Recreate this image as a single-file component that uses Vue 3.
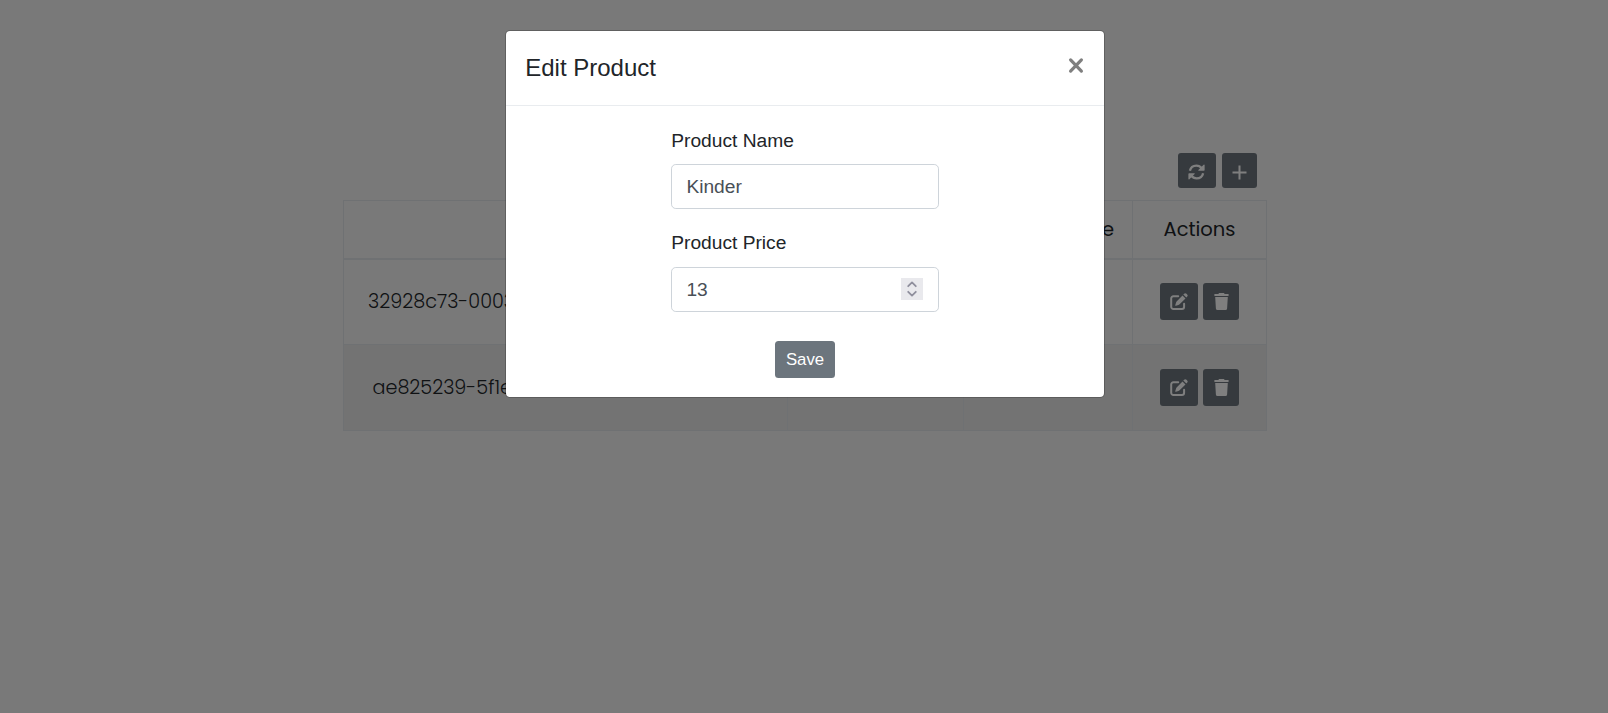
<script setup>
import { ref } from 'vue'

const rows = [
  { id: '32928c73-0003', cls: 'first' },
  { id: 'ae825239-5f1e', cls: 'second' },
]
const name = ref('Kinder')
const price = ref('13')
</script>

<template>
  <div class="page">
    <main class="products">
      <div class="toolbar">
        <button class="btn refresh" aria-label="Refresh">
          <svg width="17" height="16" viewBox="0 0 17 16">
            <path class="arc" d="M1.9 6.8C2.6 3.6 5.2 1.6 8.4 1.6c2.2 0 4 .9 5.3 2.6" />
            <path d="M16.6.9v5.2q0 .7-.7.7h-5.2q-.9-.2-.3-.9L15.6.7q.8-.5 1 .2z" />
            <path class="arc" d="M15.1 9.2c-.7 3.2-3.3 5.2-6.5 5.2-2.2 0-4-.9-5.3-2.6" />
            <path d="M.4 15.1V9.9q0-.7.7-.7h5.2q.9.2.3.9l-5.2 5.2q-.8.5-1-.2z" />
          </svg>
        </button>
        <button class="btn add" aria-label="Add">
          <svg width="15" height="15" viewBox="0 0 15 15"><path d="M6.5 .5h2v6h6v2h-6v6h-2v-6h-6v-2h6z" /></svg>
        </button>
      </div>
      <div class="table">
        <div class="tr head">
          <div class="cell"></div>
          <div class="cell"></div>
          <div class="cell price">Price</div>
          <div class="cell actions">Actions</div>
        </div>
        <div v-for="r in rows" :key="r.id" class="tr body" :class="r.cls">
          <div class="cell id">{{ r.id }}</div>
          <div class="cell"></div>
          <div class="cell"></div>
          <div class="cell buttons">
            <button class="btn edit" aria-label="Edit">
              <svg width="18" height="18" viewBox="0 0 18 18">
                <path class="frame" d="M8.2 3.2H3.4A2.2 2.2 0 0 0 1.2 5.4v8.4A2.2 2.2 0 0 0 3.4 16h8.5a2.2 2.2 0 0 0 2.2-2.2V10.8" />
                <path d="M13.3 1.6 14.1.8a1.7 1.7 0 0 1 2.4 0l.6.6a1.7 1.7 0 0 1 0 2.4l-.8.8zM12.5 2.4l3 3-6.2 6.1q-.4.4-.9.6l-2.5.7q-.8.1-.6-.7l.8-2.6q.1-.5.5-.9z" />
              </svg>
            </button>
            <button class="btn trash" aria-label="Delete">
              <svg width="15" height="17" viewBox="0 0 15 17">
                <path d="M5 .1h5l.6 1H14q.8 0 .8.9T14 2.9H1Q.2 2.9.2 2T1 1.1h3.4zM1.2 4h12.6l-.7 11.4q-.1 1.6-1.6 1.6h-8q-1.5 0-1.6-1.6z" />
              </svg>
            </button>
          </div>
        </div>
      </div>
    </main>

    <div class="backdrop"></div>

    <section class="modal" role="dialog">
      <header class="modal-head">
        <h5>Edit Product</h5>
        <button class="close" aria-label="Close">
          <svg width="14" height="15" viewBox="0 0 14 15"><path d="M1.6 1.9 12.4 13.1M12.4 1.9 1.6 13.1" /></svg>
        </button>
      </header>
      <form class="form" @submit.prevent>
        <label for="name">Product Name</label>
        <div class="field"><input id="name" v-model="name" type="text" /></div>
        <label class="price-label" for="price">Product Price</label>
        <div class="field">
          <input id="price" v-model="price" type="text" />
          <span class="spinner">
            <svg width="22" height="22" viewBox="0 0 22 22"><path d="M7.2 8.2 11 4.4l3.8 3.8M7.2 13.8l3.8 3.8 3.8-3.8" /></svg>
          </span>
        </div>
        <button class="save" type="submit">Save</button>
      </form>
    </section>
  </div>
</template>

<style>
body {
  margin: 0;
}
</style>

<style scoped>
* {
  box-sizing: border-box;
}
.page {
  position: relative;
  width: 100%;
  height: 713px;
  overflow: hidden;
  background: #f3f3f3;
  color: #212529;
  font-family: "Liberation Sans", Arial, sans-serif;
}
button {
  border: 0;
  padding: 0;
  margin: 0;
  font-family: inherit;
}
.products {
  width: 924px;
  margin-left: 343px;
  padding-top: 153px;
  font-family: Poppins, Inter, sans-serif;
}
.toolbar {
  display: flex;
  justify-content: flex-end;
  gap: 6px;
  padding-right: 10px;
  height: 47px;
}
.btn {
  display: flex;
  align-items: center;
  justify-content: center;
  height: 37px;
  border-radius: 3px;
  background: #6c757d;
}
.btn svg {
  fill: #fff;
}
.refresh {
  width: 38px;
  height: 35px;
  padding: 2px 1px 0 0;
}
.add {
  width: 35px;
  height: 35px;
  padding-top: 3px;
}
.arc {
  fill: none;
  stroke: #fff;
  stroke-width: 2.3;
}
.table {
  border: 1px solid #dee2e6;
}
.tr {
  display: grid;
  grid-template-columns: 444px 176px 169px 133px;
}
.cell {
  border-right: 1px solid #dee2e6;
}
.cell:last-child {
  border-right: 0;
}
.head {
  height: 59px;
  border-bottom: 2px solid #dee2e6;
  font-size: 19.5px;
  line-height: 58px;
}
.price {
  text-align: right;
  padding-right: 18px;
}
.actions {
  text-align: center;
}
.body {
  font-size: 19.2px;
  font-weight: 300;
}
.first {
  height: 84px;
}
.second {
  height: 86px;
  border-top: 1px solid #dee2e6;
  background: #e7e7e7;
}
.id {
  padding-left: 24px;
  line-height: 84px;
}
.second .id {
  padding-left: 28.5px;
  line-height: 86px;
  height: 85px;
}
.buttons {
  display: flex;
  gap: 5px;
  padding: 23px 0 0 27px;
}
.second .buttons {
  padding-top: 24px;
}
.edit {
  width: 38px;
}
.trash {
  width: 36px;
}
.frame {
  fill: none;
  stroke: #fff;
  stroke-width: 2;
  stroke-linecap: round;
}
.backdrop {
  position: absolute;
  inset: 0;
  background: rgba(0, 0, 0, 0.5);
}
.modal {
  position: absolute;
  left: 505px;
  top: 30px;
  width: 600px;
  height: 368px;
  border: 1px solid rgba(0, 0, 0, 0.2);
  border-radius: 5px;
  background: #fff;
  background-clip: padding-box;
}
.modal-head {
  display: flex;
  justify-content: space-between;
  height: 75px;
  padding: 0 20.6px 0 19.2px;
  border-bottom: 1px solid #e9ecef;
}
h5 {
  margin: 0;
  font-size: 24px;
  font-weight: 400;
  line-height: 73px;
}
.close {
  height: 15px;
  margin-top: 26.6px;
  background: none;
}
.close svg {
  display: block;
  overflow: visible;
  fill: none;
  stroke: #7f7f7f;
  stroke-width: 3.2;
  stroke-linecap: round;
}
.form {
  width: 268px;
  margin: 20px auto 0;
  display: flex;
  flex-direction: column;
  font-size: 19.2px;
}
label {
  height: 38px;
  padding-left: 0.2px;
  line-height: 29px;
}
.price-label {
  line-height: 27px;
}
.field {
  position: relative;
  height: 45px;
  margin-bottom: 20px;
}
.field input {
  display: block;
  width: 100%;
  height: 100%;
  padding: 0 14.4px;
  border: 1px solid #ced4da;
  border-radius: 4.8px;
  background: #fff;
  color: #495057;
  font: inherit;
}
.spinner {
  position: absolute;
  right: 16px;
  top: 11px;
  width: 22px;
  height: 22px;
  background: #e9e9ed;
}
.spinner svg {
  display: block;
  fill: none;
  stroke: #8f8f9d;
  stroke-width: 1.8;
  stroke-linecap: round;
  stroke-linejoin: round;
}
.save {
  align-self: center;
  width: 60px;
  height: 37px;
  margin-top: 9px;
  border-radius: 3.5px;
  background: #6c757d;
  color: #fff;
  font-size: 16.8px;
}
</style>
